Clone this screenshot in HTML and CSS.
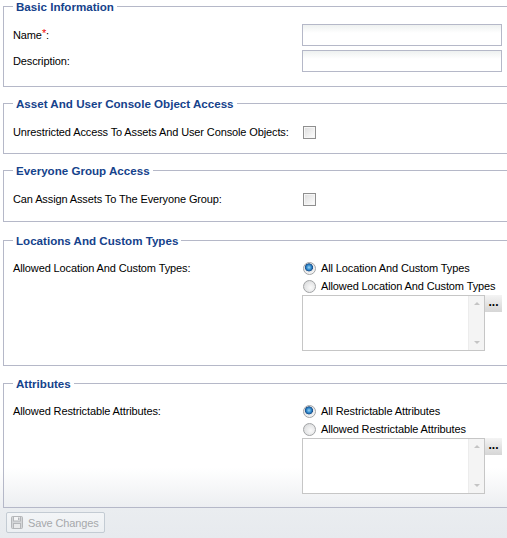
FILE: index.html
```html
<!DOCTYPE html>
<html>
<head>
<meta charset="utf-8">
<link rel="stylesheet" href="styles.css">
</head>
<body>
<div class="panel">
  <form class="form">
    <fieldset class="fs fs-basic">
      <legend>Basic Information</legend>
      <div class="row">
        <label class="lbl">Name<span class="req">*</span>:</label>
        <input class="text" type="text">
      </div>
      <div class="row row-gap">
        <label class="lbl">Description:</label>
        <input class="text" type="text">
      </div>
    </fieldset>

    <fieldset class="fs fs-check fs-a">
      <legend>Asset And User Console Object Access</legend>
      <div class="row">
        <label class="lbl">Unrestricted Access To Assets And User Console Objects:</label>
        <span class="ctl"><input class="chk" type="checkbox"></span>
      </div>
    </fieldset>

    <fieldset class="fs fs-check fs-e">
      <legend>Everyone Group Access</legend>
      <div class="row">
        <label class="lbl">Can Assign Assets To The Everyone Group:</label>
        <span class="ctl"><input class="chk" type="checkbox"></span>
      </div>
    </fieldset>

    <fieldset class="fs fs-list fs-loc">
      <legend>Locations And Custom Types</legend>
      <div class="row row-top">
        <label class="lbl lbl-top">Allowed Location And Custom Types:</label>
        <div class="choices">
          <label class="opt"><input class="rad" type="radio" name="loc" checked><span>All Location And Custom Types</span></label>
          <label class="opt"><input class="rad" type="radio" name="loc"><span>Allowed Location And Custom Types</span></label>
          <div class="listwrap">
            <div class="listbox">
              <div class="lb-body"></div>
              <div class="lb-scroll"><span class="arr up"></span><span class="arr down"></span></div>
            </div>
            <button class="dots" type="button">...</button>
          </div>
        </div>
      </div>
    </fieldset>

    <fieldset class="fs fs-list fs-attr">
      <legend>Attributes</legend>
      <div class="row row-top">
        <label class="lbl lbl-top">Allowed Restrictable Attributes:</label>
        <div class="choices">
          <label class="opt"><input class="rad" type="radio" name="attr" checked><span>All Restrictable Attributes</span></label>
          <label class="opt"><input class="rad" type="radio" name="attr"><span>Allowed Restrictable Attributes</span></label>
          <div class="listwrap">
            <div class="listbox">
              <div class="lb-body"></div>
              <div class="lb-scroll"><span class="arr up"></span><span class="arr down"></span></div>
            </div>
            <button class="dots" type="button">...</button>
          </div>
        </div>
      </div>
    </fieldset>
  </form>
  <div class="toolbar">
    <button class="save" type="button" disabled>
      <svg class="disk" width="12" height="13" viewBox="0 0 12 13">
        <rect x="0.5" y="0.5" width="11" height="12" rx="1" fill="#d4d6d8" stroke="#b4b6b9"/>
        <rect x="2.5" y="0.5" width="7" height="4.5" fill="#f4f5f6" stroke="#b4b6b9"/>
        <rect x="2.5" y="7.5" width="7" height="5" fill="#e9eaeb" stroke="#b4b6b9"/>
        <rect x="7" y="1.5" width="1.5" height="2.5" fill="#b4b6b9"/>
      </svg>
      <span>Save Changes</span>
    </button>
  </div>
</div>
</body>
</html>
```

FILE: styles.css
```css
html, body {
  margin: 0;
  padding: 0;
}
body {
  width: 507px;
  height: 538px;
  overflow: hidden;
  font-family: "Liberation Sans", Arial, sans-serif;
  font-size: 11px;
  letter-spacing: -0.12px;
  color: #000;
  background: #fff;
}
.panel {
  display: flex;
  flex-direction: column;
  height: 538px;
}
.form {
  flex: 1;
  margin: 0;
  background: linear-gradient(to bottom, #fff 0, #fff 468px, #eceef1 508px);
  overflow: hidden;
}
.fs {
  margin: 0 -30px 0 3px;
  border: 1px solid #b5b8c8;
  padding: 12px 9px 10px 9px;
}
.fs legend {
  padding: 2px 3px 0 3px;
  font-weight: bold;
  font-size: 11.6px;
  letter-spacing: 0;
  line-height: 10px;
  color: #15428b;
}
.fs-basic {
  padding-bottom: 14px;
}
.fs-a {
  margin-top: 10px;
  padding-bottom: 10px;
}
.fs-e {
  margin-top: 10px;
  padding-bottom: 11px;
}
.fs-loc {
  margin-top: 12px;
  padding-top: 13px;
  padding-bottom: 14px;
}
.fs-attr {
  margin-top: 11px;
  padding-top: 13px;
  padding-bottom: 13px;
}
.row {
  display: grid;
  grid-template-columns: 289px 200px;
  align-items: center;
  min-height: 22px;
}
.row-gap {
  margin-top: 4px;
}
.row-top {
  align-items: start;
}
.lbl {
  white-space: nowrap;
}
.lbl-top {
  line-height: 18px;
}
.req {
  color: #e00;
  position: relative;
  top: -2px;
}
.text {
  box-sizing: border-box;
  width: 200px;
  height: 22px;
  margin: 0;
  border: 1px solid #b5b8c8;
  background: linear-gradient(to bottom, #eef1f0 0, #fff 8px, #fff 100%);
  font: inherit;
}
.ctl {
  display: flex;
  align-items: center;
}
.chk {
  appearance: none;
  -webkit-appearance: none;
  box-sizing: border-box;
  width: 13px;
  height: 13px;
  margin: 0 0 0 1px;
  border: 1px solid #8f8f8f;
  background: linear-gradient(135deg, #dcdcdc 0, #f4f4f4 70%, #fff 100%);
  box-shadow: inset 0 0 0 1px #f6f6f6;
}
.choices {
  display: flex;
  flex-direction: column;
}
.opt {
  display: flex;
  align-items: center;
  height: 18px;
  white-space: nowrap;
}
.opt span {
  margin-left: 5px;
}
.rad {
  appearance: none;
  -webkit-appearance: none;
  box-sizing: border-box;
  width: 13px;
  height: 13px;
  margin: 0 0 0 1px;
  border-radius: 50%;
  border: 1px solid #a2a4a6;
  background: radial-gradient(circle at 60% 60%, #fafafa 0, #e3e4e5 60%, #d0d1d2 100%);
}
.rad:checked {
  background: radial-gradient(circle at 45% 40%, #9ad3f5 0, #2a84c8 28%, #1c4f8a 42%, #e6e7e8 48%, #f5f5f5 70%, #d8d9da 100%);
}
.listwrap {
  display: flex;
  align-items: flex-start;
}
.listbox {
  box-sizing: border-box;
  width: 183px;
  height: 56px;
  border: 1px solid #c6c6c6;
  display: flex;
  background: #fff;
}
.lb-body {
  flex: 1;
}
.lb-scroll {
  width: 16px;
  background: #f4f4f4;
  border-left: 1px solid #ececec;
  display: flex;
  flex-direction: column;
  justify-content: space-between;
  align-items: center;
  padding: 6px 0;
  box-sizing: border-box;
}
.arr {
  width: 0;
  height: 0;
  border-left: 3px solid transparent;
  border-right: 3px solid transparent;
}
.arr.up {
  border-bottom: 3px solid #c4c4c4;
}
.arr.down {
  border-top: 3px solid #c4c4c4;
}
.dots {
  box-sizing: border-box;
  width: 17px;
  height: 17px;
  margin: 0;
  padding: 0 0 3px 0;
  border: 0;
  background: linear-gradient(to bottom, #f4f4f4 0, #e4e4e4 50%, #d6d6d6 100%);
  font-family: "Liberation Sans", Arial, sans-serif;
  font-size: 12px;
  font-weight: bold;
  line-height: 10px;
  color: #000;
  letter-spacing: 0;
}
.toolbar {
  height: 30px;
  box-sizing: border-box;
  padding: 4px 0 0 6px;
  background: linear-gradient(to bottom, #eaedf0, #e7eaee);
}
.save {
  box-sizing: border-box;
  height: 21px;
  width: 99px;
  padding: 0 0 0 4px;
  display: flex;
  align-items: center;
  gap: 5px;
  border: 1px solid #c3cbd3;
  border-radius: 2px;
  background: linear-gradient(to bottom, #f3f5f7, #eceff2);
  font-family: "Liberation Sans", Arial, sans-serif;
  font-size: 11px;
  letter-spacing: -0.12px;
  color: #a6a8ab;
}
```
